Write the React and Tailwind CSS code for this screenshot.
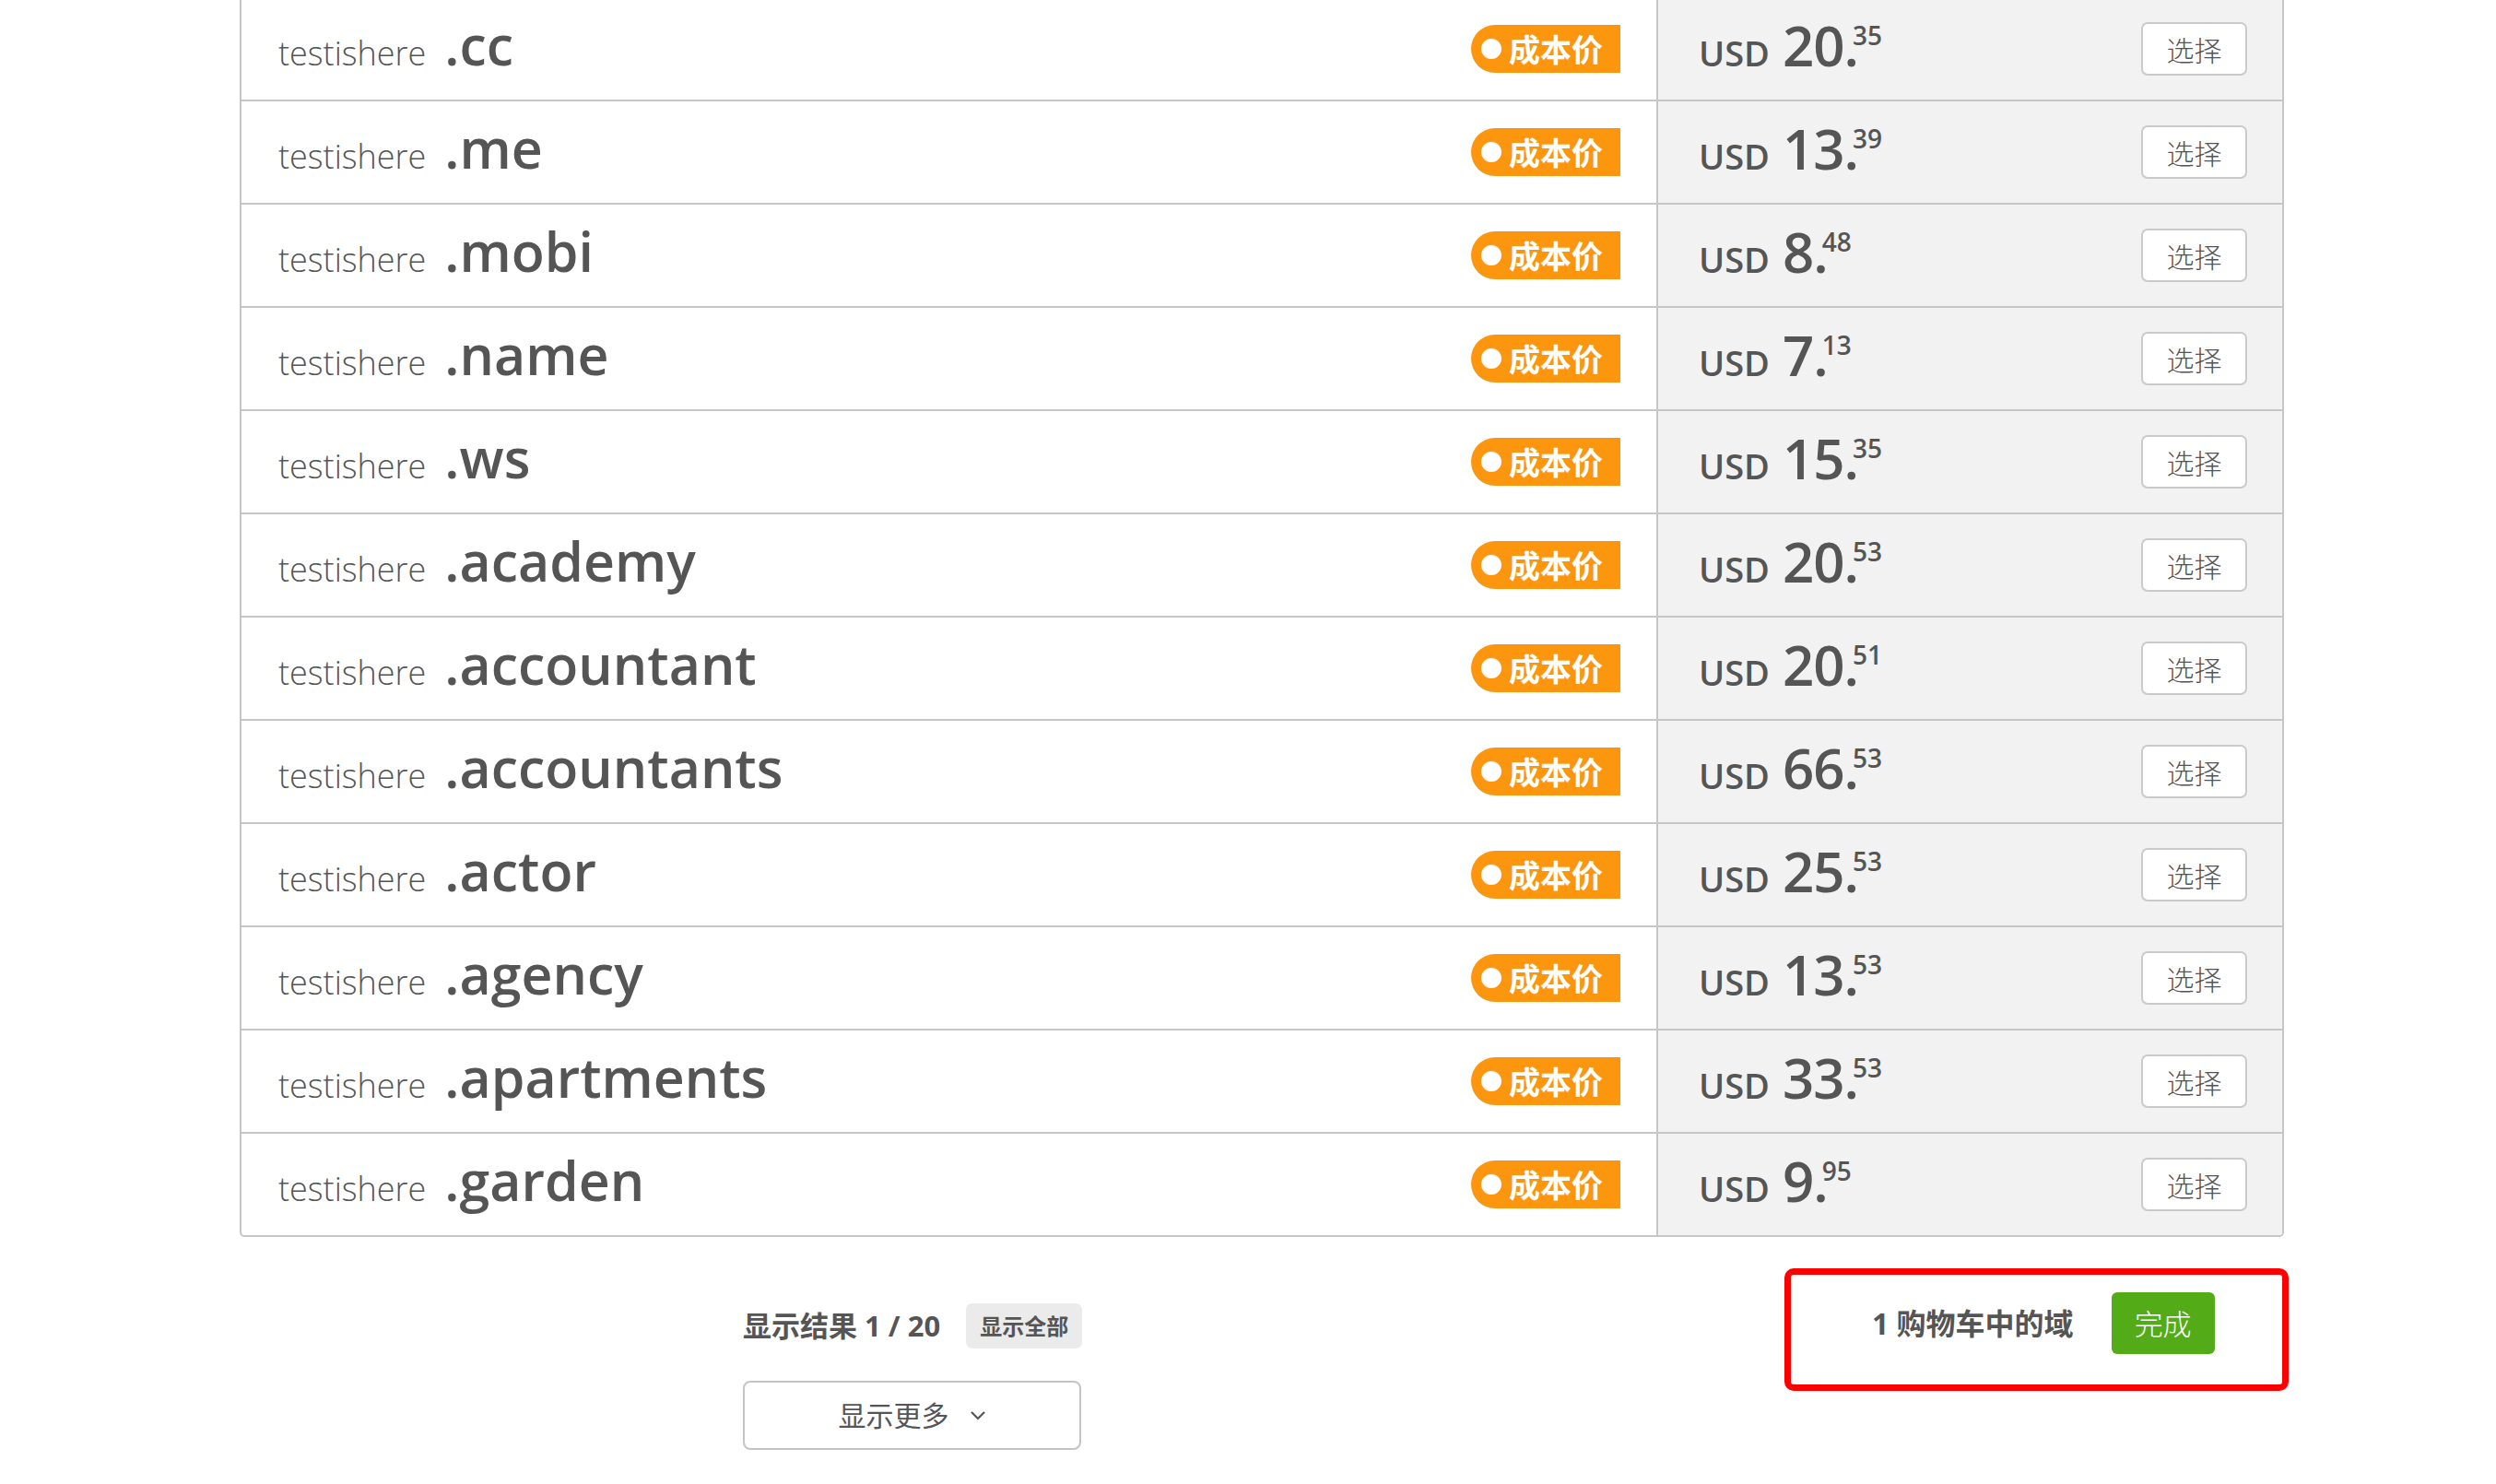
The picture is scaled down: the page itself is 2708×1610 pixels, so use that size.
import React from "react";

const rows = [
  ["cc", "20", "35"],
  ["me", "13", "39"],
  ["mobi", "8", "48"],
  ["name", "7", "13"],
  ["ws", "15", "35"],
  ["academy", "20", "53"],
  ["accountant", "20", "51"],
  ["accountants", "66", "53"],
  ["actor", "25", "53"],
  ["agency", "13", "53"],
  ["apartments", "33", "53"],
  ["garden", "9", "95"],
];

function Row({ tld, whole, cents, last }) {
  return (
    <div
      className={
        "flex " + (last ? "h-[110px]" : "h-[112px] border-b-2 border-[#c6c6c6]")
      }
    >
      <div className="flex flex-1 items-center pl-[40px] pr-[39px]">
        <div className="flex items-baseline pb-[10px]">
          <span className="text-[36px] font-light text-[#555] leading-none">testishere</span>
          <span className="ml-[20px] text-[59px] font-semibold text-[#555] leading-none">.{tld}</span>
        </div>
        <span className="ml-auto flex h-[52px] w-[162px] items-center rounded-l-full rounded-r-[3px] bg-[#fd960f] pl-[11px]">
          <span className="h-[22px] w-[22px] rounded-full bg-white" />
          <span className="ml-[8px] text-[34px] font-bold leading-none text-white font-['Noto_Sans_CJK_SC',sans-serif]">
            成本价
          </span>
        </span>
      </div>
      <div className="flex w-[679px] items-center border-l-2 border-[#c6c6c6] bg-[#f2f2f2] pl-[44px] pr-[38px]">
        <div className="flex items-baseline pb-[8px]">
          <span className="text-[38px] font-semibold leading-none text-[#555]">USD</span>
          <span className="ml-[14px] text-[60px] font-semibold leading-none text-[#555] tracking-[-1px]">
            {whole}.
          </span>
          <span className="-ml-[6px] self-start mt-[5px] text-[28px] font-semibold leading-none text-[#555]">
            {cents}
          </span>
        </div>
        <button className="ml-auto flex h-[58px] w-[115px] items-center justify-center rounded-[7px] border-2 border-[#cacaca] bg-white text-[30px] font-light text-[#555] font-['Noto_Sans_CJK_SC',sans-serif]">
          选择
        </button>
      </div>
    </div>
  );
}

export default function App() {
  return (
    <div className="min-h-[1610px] w-[2708px] overflow-hidden bg-white text-[#555] font-['Open_Sans','Noto_Sans_CJK_SC',sans-serif]">
      <div className="-mt-[4px] ml-[260px] w-[2218px] overflow-hidden rounded-b-[5px] border-2 border-[#c6c6c6]">
        {rows.map((r, i) => (
          <Row key={r[0]} tld={r[0]} whole={r[1]} cents={r[2]} last={i === rows.length - 1} />
        ))}
      </div>
      <div className="ml-[260px] flex w-[2223px] items-start">
        <div className="ml-[546px] mt-[72px] flex flex-col">
          <div className="flex items-center">
            <span className="text-[31px] font-bold leading-none text-[#555]">显示结果 1 / 20</span>
            <span className="ml-[28px] flex h-[49px] items-center rounded-[7px] bg-[#ebebeb] px-[15px] text-[24px] font-bold text-[#555]">
              显示全部
            </span>
          </div>
          <button className="mt-[35px] flex h-[75px] w-[367px] items-center justify-center rounded-[8px] border-2 border-[#c4c4c4] bg-white text-[30px] text-[#555]">
            <span className="leading-none">显示更多</span>
            <svg className="ml-[22px]" width="18" height="11" viewBox="0 0 18 11">
              <path d="M2 2 L9 9 L16 2" stroke="#555" strokeWidth="2.2" fill="none" />
            </svg>
          </button>
        </div>
        <div className="ml-auto mt-[34px] flex h-[133px] w-[547px] items-start rounded-[10px] border-[7px] border-[#ff0000] pl-[88px] pt-[19px]">
          <div className="flex items-center">
            <span className="text-[32px] font-bold leading-none text-[#555]">1 购物车中的域</span>
            <button className="ml-[41px] flex h-[67px] w-[112px] items-center justify-center rounded-[6px] bg-[#53ac17] text-[31px] font-light text-white font-['Noto_Sans_CJK_SC',sans-serif]">
              完成
            </button>
          </div>
        </div>
      </div>
    </div>
  );
}
